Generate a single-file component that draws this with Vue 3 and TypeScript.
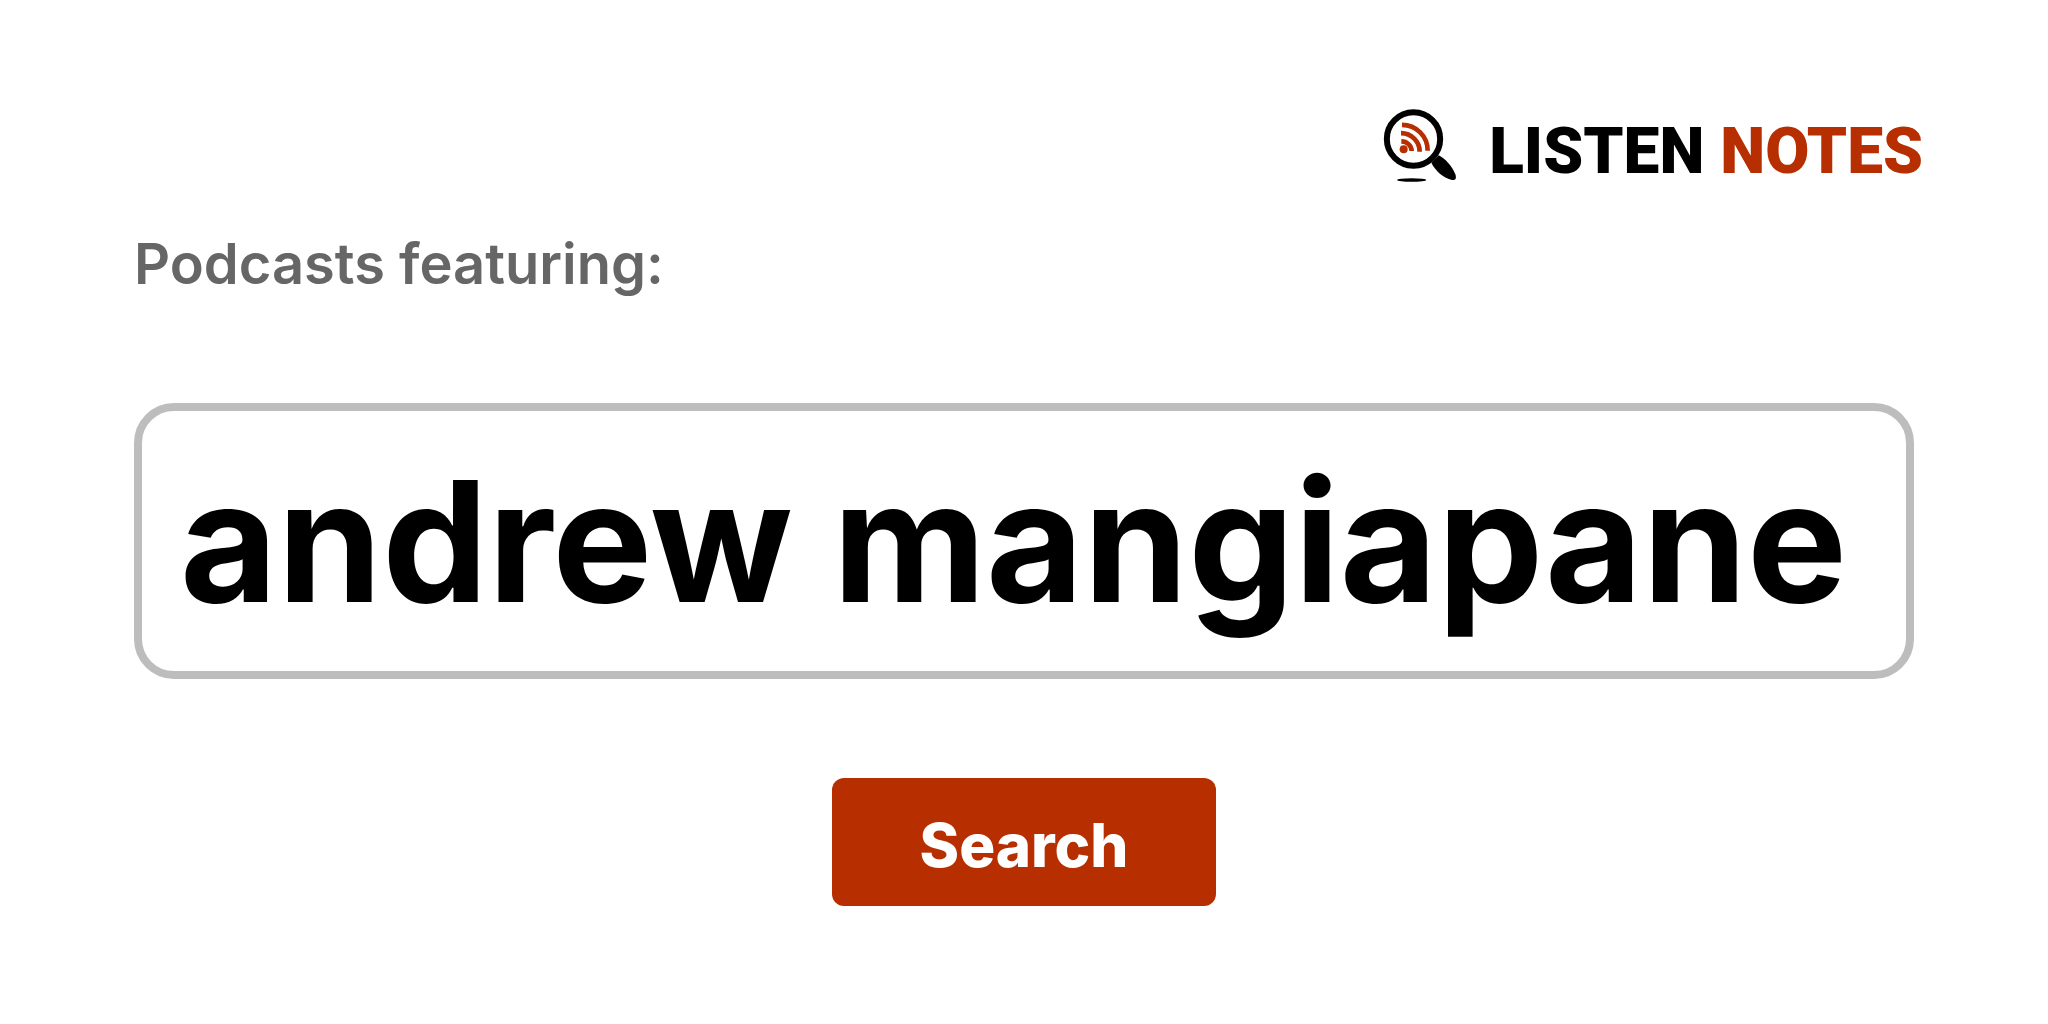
<script setup lang="ts">
import { ref } from 'vue'

const query = ref('andrew mangiapane')
</script>

<template>
  <main class="page">
    <header class="header">
      <a class="brand" href="#">
        <svg class="brand-icon" viewBox="0 15 300 300" aria-hidden="true">
          <circle cx="130.5" cy="132" r="80" fill="none" stroke="#000" stroke-width="18" />
          <path d="M184 203 L206 181 C226 191 246 214 256 238 C260 250 257 257 246 255 C221 249 197 229 184 203 Z" fill="#000" />
          <ellipse cx="125" cy="255" rx="44" ry="5.5" fill="#000" />
          <circle cx="101" cy="163" r="12" fill="#b72f00" />
          <g fill="none" stroke="#b72f00" stroke-width="14">
            <path d="M94 139 A31 30 0 0 1 125 168" />
            <path d="M93 114.500 A56 55 0 0 1 149 170" />
            <path d="M96 89.500 A77 77 0 0 1 173 167" />
          </g>
        </svg>
        <span class="brand-name">LISTEN <span class="accent">NOTES</span></span>
      </a>
    </header>

    <form class="search" @submit.prevent>
      <label class="label" for="query">Podcasts featuring:</label>
      <input id="query" v-model="query" class="field" type="text" autocomplete="off" spellcheck="false" />
      <button class="submit" type="submit">Search</button>
    </form>
  </main>
</template>

<style>
body {
  margin: 0;
  background: #fff;
}
</style>

<style scoped>
.page {
  padding: 100px 0;
  font-family: Inter, "Liberation Sans", sans-serif;
}

.header {
  display: flex;
  justify-content: flex-end;
  padding-right: 125px;
}

.brand {
  display: flex;
  align-items: center;
  gap: 19px;
  color: #000;
  text-decoration: none;
}

.brand-icon {
  width: 100px;
  height: 100px;
}

.brand-name {
  padding-top: 4px;
  font-family: Roboto, "Liberation Sans", sans-serif;
  font-size: 64px;
  font-weight: 900;
  line-height: 72px;
  white-space: nowrap;
}

.accent {
  color: #b72f00;
}

.search {
  display: flex;
  flex-direction: column;
  align-items: center;
  padding: 28px 134px 0;
}

.label {
  align-self: flex-start;
  margin-bottom: 103px;
  color: #666;
  font-size: 56px;
  font-weight: 600;
  line-height: 72px;
}

.field {
  box-sizing: border-box;
  width: 100%;
  height: 276px;
  margin: 0 0 99px;
  padding: 0 38px;
  border: 8px solid #bdbdbd;
  border-radius: 40px;
  outline: none;
  background: #fff;
  color: #000;
  font-family: inherit;
  font-size: 168px;
  font-weight: 700;
}

.submit {
  box-sizing: border-box;
  width: 384px;
  height: 128px;
  padding: 6px 0 0;
  border: 0;
  border-radius: 12px;
  background: #b72f00;
  color: #fff;
  font-family: inherit;
  font-size: 60px;
  font-weight: 800;
  cursor: pointer;
}
</style>
